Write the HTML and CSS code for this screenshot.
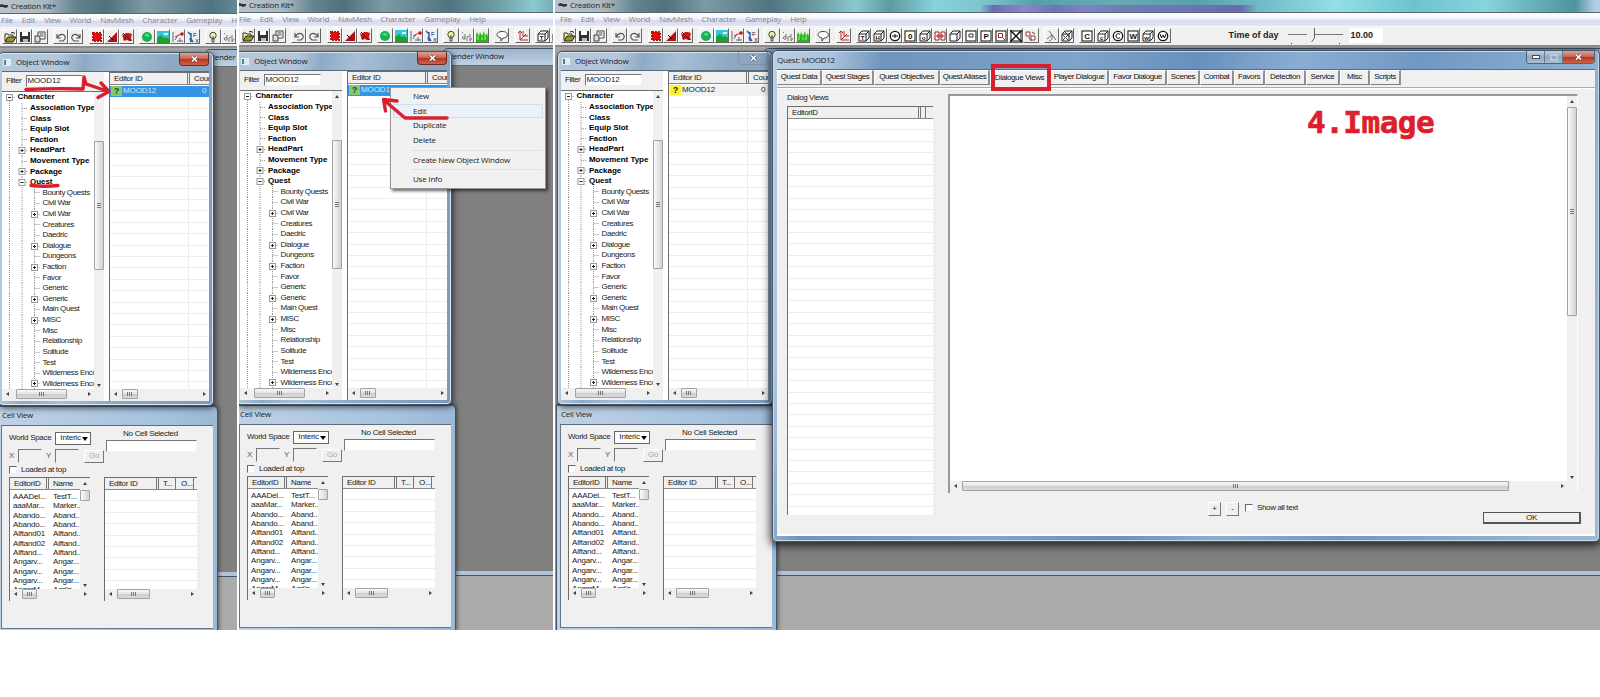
FILE: index.html
```
<!DOCTYPE html>
<html lang="en">
<head>
    <meta charset="UTF-8">
    <title>Creation Kit</title>
    <link rel="stylesheet" href="styles.css">
</head>
<body>
    <div class="strip">
        <div class="step step-1">
            <div class="kit" data-selected="green"></div>
            <svg class="marks" width="237" height="630" viewBox="0 0 237 630">
                <path d="M26 89.500Q55 88 83 89L84 77L86 84L107 91M101 83L109 91.500L98 97.500" />
                <path d="M31 185.500Q45 187 58 185.500" />
            </svg>
        </div>
        <div class="step step-2">
            <div class="kit" data-selected="green" data-menu="true"></div>
            <svg class="marks" width="314" height="630" viewBox="239 0 314 630">
                <path d="M447 118L405 118L385 101M385.500 111L383.500 99.500L397 101" />
            </svg>
        </div>
        <div class="step step-3">
            <div class="kit" data-selected="none" data-quest="true"></div>
            <div class="tab-mark"></div>
            <div class="caption">4.Image</div>
        </div>
    </div>
    <script src="script.js"></script>
</body>
</html>
```
FILE: styles.css
```
body {
    margin: 0;
    background: #fff;
    font-family: "Liberation Sans", Arial, sans-serif;
    font-size: 8px;
    letter-spacing: -0.4px;
    color: #222;
    line-height: 10px;
    white-space: nowrap;
    overflow: hidden;
}
* {
    box-sizing: border-box;
}
.strip {
    display: flex;
    gap: 2px;
    height: 630px;
}
.step {
    position: relative;
    overflow: hidden;
    height: 630px;
}
.step-1 { width: 237px; }
.step-2 { width: 314px; }
.step-3 { width: 1045px; }
.step-1 .kit { margin-left: -4px; }
.step-2 .kit { margin-left: -5px; }
.step-1 .titlebar { height: 14px; }

.kit {
    width: 1045px;
    height: 630px;
    display: flex;
    flex-direction: column;
    background: #f0f0f0;
}
.titlebar {
    height: 13px;
    padding: 0 0 2px 3px;
    display: flex;
    align-items: center;
    gap: 2px;
    background:
        linear-gradient(90deg, transparent 425px, #6c6cb4 438px, #8a85cc 470px, #6f72ba 500px, #8280c8 530px, #6c7fb0 570px, #6f74b8 620px, #6c69b0 685px, transparent 702px) 0 5px no-repeat,
        linear-gradient(90deg, #b9c5cd 0, #a9b8c0 50px, #64838d 80px, #4f727e 110px, #7e9aa2 150px, #4f7581 215px, #6f9fa6 265px, #8cc9ce 300px, #5f9aa2 335px, #86d3da 380px, #7fc4cc 430px, #559faa 480px, #66aab6 560px, #5a9fad 640px, #6db8c4 700px, #93dfe6 780px, #6cc3cf 860px, #88d4dd 930px, #4d939d 1020px, #b3cfe6 1040px);
    border-bottom: 1px solid #56656f;
}
.titlebar, .menubar, .win-title, .menu {
    font-family: "Open Sans", "Noto Sans", sans-serif;
    font-size: 8px;
    letter-spacing: -0.25px;
}
.menubar {
    height: 13px;
    display: flex;
    align-items: center;
    gap: 9px;
    padding: 0 0 2px 5px;
    letter-spacing: -0.21px;
    color: #85858f;
    background: linear-gradient(#fff 0, #f5f6fb 40%, #d9dcee 60%, #e1e4f2);
}
.toolbar {
    height: 19px;
    display: flex;
    align-items: center;
    padding: 0 0 2px 6px;
    border-top: 1px solid #fafafa;
}
.tool {
    width: 15.2px;
    height: 15px;
    flex: none;
    padding: 1px;
    border: 1px solid #fff;
    border-right-color: #666;
    border-bottom-color: #666;
}
.tool svg {
    display: block;
    width: 12px;
    height: 12px;
}
.gap { width: 5.3px; flex: none; }
.time {
    display: flex;
    align-items: center;
    margin-left: 58px;
    font-weight: bold;
    font-size: 9px;
    letter-spacing: 0;
}
.time svg { margin: 0 6px 0 10px; }
.time output {
    width: 34px;
    height: 15px;
    line-height: 15px;
    padding-left: 1px;
    background: #fff;
}

/* workspace */
.mdi {
    flex: 1;
    position: relative;
    overflow: hidden;
    background: #ababab;
    border-top: 2px solid #8c8c8c;
}
.win {
    position: absolute;
    display: flex;
    flex-direction: column;
    border: 1px solid #415468;
    border-radius: 5px;
    background: #a9c1da;
    box-shadow: inset 0 0 0 1px #d8e5f2, 1px 2px 6px rgba(0, 0, 0, 0.65);
}
.win-title {
    display: flex;
    align-items: center;
    flex: none;
    color: #222;
}
.client {
    flex: 1;
    min-height: 0;
    background: #f0f0f0;
    border-top: 1px solid #5d6c7b;
}
.render {
    left: 209px;
    top: 1px;
    width: 850px;
    height: 528px;
    border-radius: 5px 5px 0 0;
    background: linear-gradient(#9db4cc, #c3d5e7 18px, #b1c3d6);
    padding-bottom: 4px;
    box-shadow: none;
}
.render .win-title { height: 16px; padding: 0 0 3px 4px; }
.render .client { background: #808080; }

.object {
    left: 2px;
    top: 4px;
    width: 216px;
    height: 354px;
    padding: 0 4px 4px 3px;
    background: linear-gradient(100deg, #b4c7da 0, #b4c7da 60px, #8daac5 85px, #a7c0d8 120px, #8fa9c4 170px, #7d99b7);
}
.object .win-title { height: 18px; padding-left: 1px; }
.win-title .glyph {
    width: 8px;
    height: 7px;
    margin-right: 5px;
    border: 1px solid #e6edf2;
    background: linear-gradient(90deg, #3f8a7c 40%, #dfe9ee 40%);
}
.close {
    margin-left: auto;
    align-self: flex-start;
    width: 30px;
    height: 13px;
    display: flex;
    justify-content: center;
    align-items: center;
    border: 1px solid #6b2c25;
    border-top: 0;
    border-radius: 0 0 4px 4px;
    background: linear-gradient(#e0a296, #cc6250 48%, #b43420 52%, #d0644a);
    color: #fff;
}
.close.off {
    border-color: #8095ab;
    background: none;
    color: #fff;
}
.object .client { display: flex; background: #fff; }
.nav {
    width: 102px;
    display: flex;
    flex-direction: column;
    background: #f0f0f0;
}
.filter {
    height: 19px;
    display: flex;
    align-items: center;
    gap: 5px;
    padding: 0 0 2px 4px;
    flex: none;
}
.field {
    background: #fff;
    border: 1px solid #f4f4f4;
    border-top-color: #777;
    border-left-color: #777;
}
.filter .field { width: 57px; height: 12px; letter-spacing: -0.1px; }
.tree-wrap {
    flex: 1;
    display: flex;
    min-height: 0;
    border-top: 1px solid #6e6e6e;
    background: #fff;
}
.tree {
    width: 92px;
    overflow: hidden;
}
.node {
    height: 10.62px;
    display: flex;
    align-items: center;
}
.node .twig { flex: none; height: 10.62px; }
.node b { letter-spacing: -0.04px; color: #000; }

/* scrollbars */
.sb { display: flex; background: #f0f0f0; flex: none; }
.sb.v { flex-direction: column; width: 10px; }
.sb.h { height: 12px; }
.sb i { flex: none; width: 10px; height: 10px; display: block; }
.sb.h i { height: 12px; }
.sb i::after { content: ""; display: block; width: 0; height: 0; border: 2px solid transparent; }
.sb .up::after { border-bottom: 3px solid #444; margin: 2px 0 0 3px; }
.sb .down::after { border-top: 3px solid #444; margin: 5px 0 0 3px; }
.sb .prev::after { border-right: 3px solid #444; margin: 3px 0 0 2px; }
.sb .next::after { border-left: 3px solid #444; margin: 3px 0 0 4px; }
.sb .down, .sb .next { margin-left: auto; }
.sb.v .down { margin: auto 0 0; }
.thumb {
    display: flex;
    align-items: center;
    justify-content: center;
    border: 1px solid #a2a2a2;
    border-radius: 1px;
}
.sb.v .thumb { background: linear-gradient(90deg, #fafafa, #d2d2d6); }
.sb.h .thumb { height: 10px; background: linear-gradient(#f8f8f8, #e4e4e4 45%, #cdcdd0 50%, #dadadd); }
.thumb::after { content: ""; width: 6px; height: 4px; background: repeating-linear-gradient(90deg, #777 0 1px, transparent 1px 2px); }
.sb.v .thumb::after { width: 4px; height: 6px; background: repeating-linear-gradient(#777 0 1px, transparent 1px 2px); }
.nav .sb.v .thumb { height: 129px; margin-top: 39px; }
.nav .sb.h { width: 92px; }
.nav .sb.h .thumb { width: 51px; margin-left: 4px; }
.step-1 .nav .up { visibility: hidden; }

.list {
    display: flex;
    flex-direction: column;
    overflow: hidden;
    border-left: 1px solid #6e6e6e;
    border-top: 1px solid #6e6e6e;
    background: #fff;
}
.head {
    display: flex;
    flex: none;
    height: 12px;
    background: #f0f0f0;
    border-bottom: 1px solid #888;
    line-height: 12px;
}
.head span {
    flex: none;
    overflow: hidden;
    padding-left: 4px;
    border-right: 1px solid #777;
    margin-right: 1px;
    box-shadow: 1px 0 #f0f0f0;
}
.head span + span { border-left: 1px solid #777; }
.grid {
    flex: 1;
    min-height: 0;
    overflow: hidden;
    background: repeating-linear-gradient(transparent 0 10.4px, #ededed 10.4px 11.4px);
}
.assets { width: 100px; margin-left: 5px; }
.object .assets .head { margin-bottom: 1px; letter-spacing: -0.3px; }
.assets .head span:first-child { width: 78px; }
.assets .grid {
    background: linear-gradient(90deg, transparent 78px, #ececec 78px 79px, transparent 79px), repeating-linear-gradient(transparent 0 10.4px, #ededed 10.4px 11.4px);
}
.row {
    display: flex;
    align-items: center;
    height: 10.5px;
    background: #f1f1f1;
    letter-spacing: -0.1px;
}
.row .badge {
    width: 11px;
    margin-left: 1px;
    text-align: center;
    font-weight: bold;
    font-size: 9px;
    background: #fbf236;
}
.row .name { width: 80px; padding-left: 1px; }
.selected { background: #3395e4; color: #cfeaff; }
.selected .badge { background: #86c96a; color: #1c4a2c; }
.assets .thumb { width: 16px; margin-left: 2px; }

/* cell view */
.cell {
    left: 1px;
    top: 357px;
    width: 221px;
    height: 227px;
    padding: 0 4px 2px 3px;
    border-radius: 0 5px 0 0;
    background: linear-gradient(90deg, #c0d2e4, #a6c3df 70%, #9bb8d6);
    box-shadow: inset 0 1px #5c7187, 1px 0 4px rgba(0, 0, 0, 0.5);
}
.cell .win-title { height: 19px; padding: 0 0 2px 1px; }
.cell .client {
    display: flex;
    padding-left: 7px;
    border-left: 1px solid #63788c;
    border-bottom: 1px solid #63788c;
}
.cell-left { width: 95px; padding-top: 5px; letter-spacing: -0.3px; }
.line { display: flex; align-items: center; height: 14px; }
.combo {
    width: 36px;
    height: 13px;
    margin-left: 4px;
    padding-left: 4px;
    display: flex;
    align-items: center;
    justify-content: space-between;
    background: #fff;
    border: 1px solid #666;
    letter-spacing: -0.2px;
}
.combo::after { content: ""; border: 3px solid transparent; border-top: 4px solid #000; border-bottom: 0; margin: 1px 2px 0 0; }
.xy { margin-top: 4px; color: #555; }
.xy .field { width: 24px; height: 14px; background: #f0f0f0; margin: 0 4px; }
.btn {
    display: flex;
    align-items: center;
    justify-content: center;
    border: 1px solid #fff;
    border-right-color: #777;
    border-bottom-color: #777;
    background: #f0f0f0;
}
.xy .btn { width: 20px; height: 13px; margin-left: 1px; color: #aaa; }
.check { width: 8px; height: 8px; border: 1px solid #eee; border-top-color: #666; border-left-color: #666; background: #fff; margin-right: 4px; flex: none; }
.cell-right { width: 93px; padding-top: 3px; text-align: center; letter-spacing: -0.3px; }
.cell-right .field { height: 12px; margin: 1px 0 25px 2px; }
.cell-right .list { text-align: left; }
.cell .list { height: 124px; }
.cell-left .list { width: 81px; flex-direction: row; flex-wrap: wrap; }
.pair { width: 70px; height: 111px; overflow: hidden; }
.pair .head span:first-child { width: 37px; }
.pair .head span + span { border-right: 0; margin: 0; }
.pair .cells { display: grid; grid-template-columns: 40px 30px; padding: 2px 0 0 3px; line-height: 9.35px; letter-spacing: -0.2px; }
.pair .cells span { overflow: hidden; }
.cell-left .sb.v { height: 111px; }
.cell-left .sb.h { width: 80px; }
.cell-left .sb.v .thumb { height: 11px; margin-top: 2px; }
.cell-left .sb.v .thumb::after { display: none; }
.cell-left .sb.h .thumb { width: 15px; margin-left: 2px; }
.cell-right .head span:nth-child(1) { width: 52px; }
.cell-right .head span:nth-child(2) { width: 18px; }
.cell-right .head span:nth-child(3) { width: 17px; border-left: 0; }
.cell-right .thumb { width: 33px; margin-left: 2px; }

/* context menu */
.menu {
    position: absolute;
    left: 156px;
    top: 40px;
    width: 156px;
    height: 102px;
    padding: 1px 2px;
    background: #f1f1f1;
    border: 1px solid #979797;
    box-shadow: 2px 2px 3px rgba(0, 0, 0, 0.6);
    letter-spacing: -0.21px;
}
.menu div { height: 14.7px; line-height: 14px; padding-left: 20px; }
.menu .hot { background: #ecf1f7; outline: 1px solid #cfdfee; outline-offset: -1px; }
.menu hr { margin: 2px 0 2px 18px; border: 0; border-top: 1px solid #e2e2e2; }

/* quest dialog */
.quest {
    left: 217px;
    top: 3px;
    width: 828px;
    height: 492px;
    padding: 0 4px 5px 4px;
    background: linear-gradient(100deg, #bdd0e3 0, #a9c2dc 60px, #6f94bd 110px, #7fa3ca 300px, #6890bd 420px, #8badd2 520px, #7198c3 640px, #86a9cf 760px, #9fb9d3);
    box-shadow: inset 0 0 0 1px #c6d8ea, 0 2px 8px 2px rgba(0, 0, 0, 0.7);
}
.quest .win-title { height: 18px; padding-bottom: 1px; }
.win-buttons { margin-left: auto; align-self: flex-start; display: flex; border: 1px solid #53677c; border-top: 0; border-radius: 0 0 4px 4px; overflow: hidden; }
.win-buttons .wb { width: 18px; height: 12px; display: flex; align-items: center; justify-content: center; border-right: 1px solid #667d94; background: linear-gradient(#c4d3e1, #8fa8c0 50%, #a9bfd4); }
.win-buttons .close { width: 31px; height: 12px; border: 0; border-radius: 0; }
.quest .client { border-bottom: 2px solid #fff; }
.tabs { display: flex; height: 18px; border-bottom: 1px solid #aaa; }
.tab {
    height: 15px;
    line-height: 12px;
    text-align: center;
    border: 1px solid #fff;
    border-right: 2px solid #909090;
    border-bottom: 1px solid #808080;
    color: #111;
}
.tab.active { line-height: 14px; border-color: #fff transparent transparent #fff; }
.page { display: flex; height: 424px; border-top: 1px solid #fff; }
.views { width: 146px; margin-left: 10px; padding-top: 4px; }
.views .list { height: 409px; margin-top: 3px; }
.views .list .head span:first-child { width: 131px; }
.canvas {
    width: 630px;
    height: 399px;
    margin: 5px 0 0 15px;
    display: grid;
    grid-template-columns: 617px 10px;
    grid-template-rows: 385px 12px;
    border-left: 2px solid #999;
    border-top: 2px solid #999;
    border-right: 1px solid #fff;
    background: #fff;
}
.canvas .sb.v .thumb { height: 209px; margin-top: 1px; }
.canvas .sb.h .thumb { width: 547px; margin-left: 2px; }
.canvas .corner { background: #f0f0f0; }
.actions { display: flex; margin-left: 431px; margin-top: -14px; height: 26px; }
.actions .btn { width: 13px; height: 14px; margin: 4px 5px 0 0; }
.actions .check { margin: 6px 4px 0 1px; }
.actions span { line-height: 19px; letter-spacing: -0.35px; }
.actions .ok { width: 98px; height: 12px; margin: 14px 14px 0 auto; border: 1px solid #555; border-right-width: 2px; border-bottom-width: 2px; }

/* red notes */
.marks { position: absolute; left: 0; top: 0; fill: none; stroke: #d9202e; stroke-width: 3.4px; stroke-linejoin: round; stroke-linecap: round; }
.tab-mark { position: absolute; left: 436px; top: 64px; width: 60px; height: 27px; border: 4px solid #d5202f; }
.caption {
    position: absolute;
    left: 752px;
    top: 103px;
    font: bold 31px/38px "Comic Sans MS", "DejaVu Sans Mono", monospace;
    letter-spacing: -0.5px;
    color: #dd1f2d;
    -webkit-text-stroke: 0.7px #dd1f2d;
}
```
FILE: script.js
```
// toolbar icons, 12x12
const box = '<rect x="1" y="1" width="10" height="10" fill="#fff" stroke="#111"/>';
const cube = '<path d="M1 4h7v7H1zM1 4l3-3h7l-3 3M11 1v7l-3 3" fill="#fff" stroke="#222"/>';
const ring = '<circle cx="6" cy="6" r="4.7" fill="#fff" stroke="#111" stroke-width="1.3"/>';
const letter = (t, x = 6, y = 9) =>
    `<text x="${x}" y="${y}" font-size="8" font-weight="bold" text-anchor="middle" fill="#111">${t}</text>`;
const small = t => `<text x="4.5" y="10" font-size="6" font-weight="bold" text-anchor="middle" fill="#111">${t}</text>`;

const icons = {
    open: '<path d="M1 10V3h3l1 1h4v2" fill="#f5f0a0" stroke="#333"/><path d="M1 11l3-5h8l-3 5z" fill="#98952a" stroke="#222"/><path d="M7 2q2-1.500 4 .5" fill="none" stroke="#222"/>',
    save: '<path d="M1 1h10v10H1z" fill="#333"/><path d="M3 1h6v4H3z" fill="#fff"/><path d="M4 8h5v3H4z" fill="#bbb"/>',
    props: '<path d="M4 1h7v7H4z" fill="#fff" stroke="#444"/><path d="M5.500 3h4M5.500 5h4" stroke="#444"/><path d="M1 5h4l1 2v4H1z" fill="#ddd" stroke="#444"/>',
    undo: '<path d="M2 3v4h4M2 7q3-5 7-3 3 3-1 6H4" fill="none" stroke="#555" stroke-width="1.200"/>',
    redo: '<path d="M10 3v4H6M10 7Q7 2 3 4q-3 3 1 6h5" fill="none" stroke="#555" stroke-width="1.200"/>',
    snap: '<path d="M2 2h8v8H2z" fill="#e01010" stroke="#c01010" stroke-width="2" stroke-dasharray="2 1"/>',
    angle: '<path d="M1 11L11 1v10z" fill="#b01212"/><path d="M3 5l4 4" stroke="#400" />',
    ref: '<path d="M1 3l2 1 2-2h3l3 1-1 4 1 3H8L6 9l-3 1-1-3z" fill="#d01515"/><path d="M2 2l8 8M3 9l2-3" stroke="#511"/>',
    world: '<circle cx="6" cy="6" r="5" fill="#17b054"/><path d="M3 5q2-3 4-2t1 3" fill="#5fd68a"/>',
    land: '<path d="M0 0h12v12H0z" fill="#32c8d8"/><path d="M0 7l4-3 3 3 2-1 3 2v4H0z" fill="#17a32c"/><path d="M7 2h4v2H7z" fill="#d7fbff"/>',
    link: '<path d="M1 1v10M3 9l3-5M5 10h6M8 7v4" stroke="#667" fill="none"/><circle cx="10" cy="3" r="1.800" fill="#d01020"/><path d="M3 6l6-3" stroke="#c33"/>',
    fx: '<path d="M1 1l3 3v7l-1-4M4 2v6l2 3" stroke="#2a5fae" stroke-width="1.500" fill="none"/><text x="6" y="5.500" font-size="6" fill="#224">F</text><text x="8" y="11.500" font-size="6" fill="#224">X</text>',
    bulb: '<circle cx="6" cy="4.500" r="3.200" fill="#f3f1a4" stroke="#444"/><path d="M5 8h2v3H5zM6 5v3" stroke="#444" fill="#fff"/>',
    fog: '<path d="M1 3l1-1M4 9V4M1 8q0-2 3-1M1 8q1 2 3 1M6 11V7l2-1M9 4v7l2-3" stroke="#777" fill="none"/>',
    grass: '<path d="M0 12V5l1-3 2 4 1-4 2 4 2-5 1 5 2-3 1 4v5z" fill="#25b81e"/><path d="M2 10V6M6 10V7M9 10V6" stroke="#bff06a"/>',
    talk: '<path d="M6 1.500c8 0 6 7 1 6.500L5 11V8C-1 7 0 1.500 6 1.500z" fill="#fff" stroke="#444"/>',
    axes: '<path d="M3 1v9h8M3 10L9 4M6 1v5h5M1 3l2-2 2 2" stroke="#c02a2a" fill="none"/>',
    cubeT: cube + small('T'), cubeH: cube + small('H'), ringT: ring + '<path d="M3 6h6M6 4v4" stroke="#111"/>',
    boxO: box + letter('0'), cubeO: cube + small('o'),
    panes: '<path d="M1 2h4v8H1zM7 2h4v8H7z" fill="#fff" stroke="#922"/><path d="M2 6h8M4 4v4M8 4v4" stroke="#c22"/>',
    cube: cube, boxBox: box + '<path d="M4 4h4v3H4z" fill="none" stroke="#333"/>', boxP: box + letter('P'),
    boxRed: box + '<path d="M3.500 3.500h4v4h-4z" fill="none" stroke="#a22"/><path d="M8 8l3 3" stroke="#c22"/>',
    boxX: box + '<path d="M0 0l12 12M12 0L0 12" stroke="#111" stroke-width="1.500"/>',
    cubes: '<path d="M1 2h4v4H1zM6 6h4v4H6z" fill="#fff" stroke="#a33"/><path d="M4 7l2 4M7 2l3 2" stroke="#444"/>',
    ruler: '<path d="M3 1l7 9M1 9l5-4M3 11q4-1 3-5" stroke="#667" fill="none"/>',
    cubeX: cube + '<path d="M2 5l5 5M7 5l-5 5M4 2l5 5" stroke="#444"/>',
    boxC: box + letter('C'), cubeC: cube + small('c'), ringC: ring + '<path d="M8 4.500a2.300 2.300 0 1 0 0 3" stroke="#111" fill="none"/>',
    boxW: box + letter('W'), cubeW: cube + small('w'), ringW: ring + '<path d="M3 4l1.500 4L6 5l1.500 3L9 4" stroke="#111" fill="none"/>'
};

const toolGroups = [
    ['open', 'save', 'props'], ['undo', 'redo'], ['snap', 'angle', 'ref'],
    ['world', 'land', 'link', 'fx'], ['bulb', 'fog', 'grass'], ['talk'], ['axes'],
    ['cubeT', 'cubeH', 'ringT', 'boxO', 'cubeO', 'panes', 'cube', 'boxBox', 'boxP', 'boxRed', 'boxX', 'cubes'],
    ['ruler', 'cubeX'], ['boxC', 'cubeC', 'ringC', 'boxW', 'cubeW', 'ringW']
];

// level, label, box: '+', '-' or nothing
const tree = [
    [0, 'Character', '-'], [1, 'Association Type'], [1, 'Class'], [1, 'Equip Slot'], [1, 'Faction'],
    [1, 'HeadPart', '+'], [1, 'Movement Type'], [1, 'Package', '+'], [1, 'Quest', '-'],
    [2, 'Bounty Quests'], [2, 'Civil War'], [2, 'Civil War', '+'], [2, 'Creatures'], [2, 'Daedric'],
    [2, 'Dialogue', '+'], [2, 'Dungeons'], [2, 'Faction', '+'], [2, 'Favor'], [2, 'Generic'],
    [2, 'Generic', '+'], [2, 'Main Quest'], [2, 'MISC', '+'], [2, 'Misc'], [2, 'Relationship'],
    [2, 'Solitude'], [2, 'Test'], [2, 'Wilderness Encounters'], [2, 'Wilderness Encounters', '+']
];

const cells = [
    ['AAADel...', 'TestT...'], ['aaaMar...', 'Marker...'], ['Abando...', 'Aband...'], ['Abando...', 'Aband...'],
    ['Alftand01', 'Alftand...'], ['Alftand02', 'Alftand...'], ['Alftand...', 'Alftand...'], ['Angarv...', 'Angar...'],
    ['Angarv...', 'Angar...'], ['Angarv...', 'Angar...'], ['AngarM...', 'Agri\'s...']
];

const tabs = [
    ['Quest Data', 45], ['Quest Stages', 52], ['Quest Objectives', 66], ['Quest Aliases', 50],
    ['Dialogue Views', 60], ['Player Dialogue', 59], ['Favor Dialogue', 58], ['Scenes', 33], ['Combat', 34],
    ['Favors', 31], ['Detection', 41], ['Service', 34], ['Misc', 30], ['Scripts', 31]
];

const cross = '<svg width="9" height="8" viewBox="0 0 9 8"><path d="M2 1.500l5 5M7 1.500l-5 5" stroke="#555" stroke-width="3"/><path d="M2 1.500l5 5M7 1.500l-5 5" stroke="#fff" stroke-width="1.600"/></svg>';

const vbar = '<div class="sb v"><i class="up"></i><div class="thumb"></div><i class="down"></i></div>';
const hbar = '<div class="sb h"><i class="prev"></i><div class="thumb"></div><i class="next"></i></div>';

function toolbar() {
    return toolGroups.map(group => group.map(name =>
        `<div class="tool"><svg viewBox="0 0 12 12">${icons[name]}</svg></div>`).join('')
    ).join('<div class="gap"></div>');
}

function treeNode([level, label, sign]) {
    const x = 7.5 + level * 12.5;
    const w = 15.5 + level * 12.5;
    let art = `<path d="M${x} 5.500H${w - 2}" stroke="#999" stroke-dasharray="1 1"/>`;
    for (let i = 0; i <= level; i++) {
        const top = i === 0 && level === 0 ? 5 : 0;
        art += `<path d="M${7.5 + i * 12.5} ${top}V11" stroke="#999" stroke-dasharray="1 1"/>`;
    }
    if (sign) {
        art += `<rect x="${x - 3}" y="2.500" width="6" height="6" fill="#fff" stroke="#999"/><path d="M${x - 1.5} 5.500h3" stroke="#222"/>`;
        if (sign === '+') art += `<path d="M${x} 4v3" stroke="#222"/>`;
    }
    const text = level < 2 ? `<b>${label}</b>` : `<span>${label}</span>`;
    return `<div class="node"><svg class="twig" width="${w}" height="10.620">${art}</svg>${text}</div>`;
}

function questWindow() {
    const strip = tabs.map(([label, w]) =>
        `<div class="tab${label === 'Dialogue Views' ? ' active' : ''}" style="width:${w}px">${label}</div>`).join('');
    return `
    <div class="win quest">
        <div class="win-title">Quest: MOOD12
            <div class="win-buttons">
                <div class="wb"><svg width="8" height="4"><rect x=".5" y=".5" width="7" height="3" fill="#fff" stroke="#445"/></svg></div>
                <div class="wb"><svg width="8" height="7"><rect x="1" y="1" width="6" height="5" fill="none" stroke="#d4dfe9"/></svg></div>
                <div class="close">${cross}</div>
            </div>
        </div>
        <div class="client">
            <div class="tabs">${strip}</div>
            <div class="page">
                <div class="views">Dialog Views
                    <div class="list"><div class="head"><span>EditorID</span><span></span></div><div class="grid"></div></div>
                </div>
                <div class="canvas"><div></div>${vbar}${hbar}<div class="corner"></div></div>
            </div>
            <div class="actions">
                <div class="btn">+</div><div class="btn">-</div>
                <div class="check"></div><span>Show all text</span>
                <div class="btn ok">OK</div>
            </div>
        </div>
    </div>`;
}

function contextMenu() {
    return `
    <div class="menu">
        <div>New</div><div class="hot">Edit</div><div>Duplicate</div><div>Delete</div><hr>
        <div>Create New Object Window</div><hr><div>Use Info</div>
    </div>`;
}

document.querySelectorAll('.kit').forEach(kit => {
    const selected = kit.dataset.selected === 'green';
    kit.innerHTML = `
    <div class="titlebar">
        <svg width="10" height="8" viewBox="0 0 10 8"><path d="M0 3l3-1 2 1h4v2l-3 1-2-1H1z" fill="#333"/></svg>
        Creation Kit*
    </div>
    <div class="menubar"><span>File</span><span>Edit</span><span>View</span><span>World</span><span>NavMesh</span><span>Character</span><span>Gameplay</span><span>Help</span></div>
    <div class="toolbar">${toolbar()}
        <div class="time">Time of day
            <svg width="55" height="17" viewBox="0 0 55 17"><path d="M0 7.500h19M27 7.500h28" stroke="#777"/><path d="M26.500 1v10l-3 4" fill="none" stroke="#666"/><path d="M3.500 16v1M51.500 16v1" stroke="#333"/></svg>
            <output>10.00</output>
        </div>
    </div>
    <div class="mdi">
        <div class="win render"><div class="win-title">Render Window</div><div class="client"></div></div>
        <div class="win cell">
            <div class="win-title">Cell View</div>
            <div class="client">
                <div class="cell-left">
                    <div class="line">World Space<div class="combo">Interic</div></div>
                    <div class="line xy">X<div class="field"></div>Y<div class="field"></div><div class="btn">Go</div></div>
                    <div class="line"><div class="check"></div>Loaded at top</div>
                    <div class="list">
                        <div class="pair">
                            <div class="head"><span>EditorID</span><span>Name</span></div>
                            <div class="cells">${cells.map(c => `<span>${c[0]}</span><span>${c[1]}</span>`).join('')}</div>
                        </div>${vbar}${hbar}
                    </div>
                </div>
                <div class="cell-right">No Cell Selected
                    <div class="field"></div>
                    <div class="list">
                        <div class="head"><span>Editor ID</span><span>T...</span><span>O...</span></div>
                        <div class="grid"></div>${hbar}
                    </div>
                </div>
            </div>
        </div>
        <div class="win object">
            <div class="win-title"><div class="glyph"></div>Object Window<div class="close${selected ? '' : ' off'}">${cross}</div></div>
            <div class="client">
                <div class="nav">
                    <div class="filter">Filter<div class="field">MOOD12</div></div>
                    <div class="tree-wrap"><div class="tree">${tree.map(treeNode).join('')}</div>${vbar}</div>
                    ${hbar}
                </div>
                <div class="list assets">
                    <div class="head"><span>Editor ID</span><span>Count</span></div>
                    <div class="grid"><div class="row${selected ? ' selected' : ''}"><div class="badge">?</div><div class="name">MOOD12</div>0</div></div>
                    ${hbar}
                </div>
            </div>
        </div>
        ${kit.dataset.menu ? contextMenu() : ''}
        ${kit.dataset.quest ? questWindow() : ''}
    </div>`;
});
```
